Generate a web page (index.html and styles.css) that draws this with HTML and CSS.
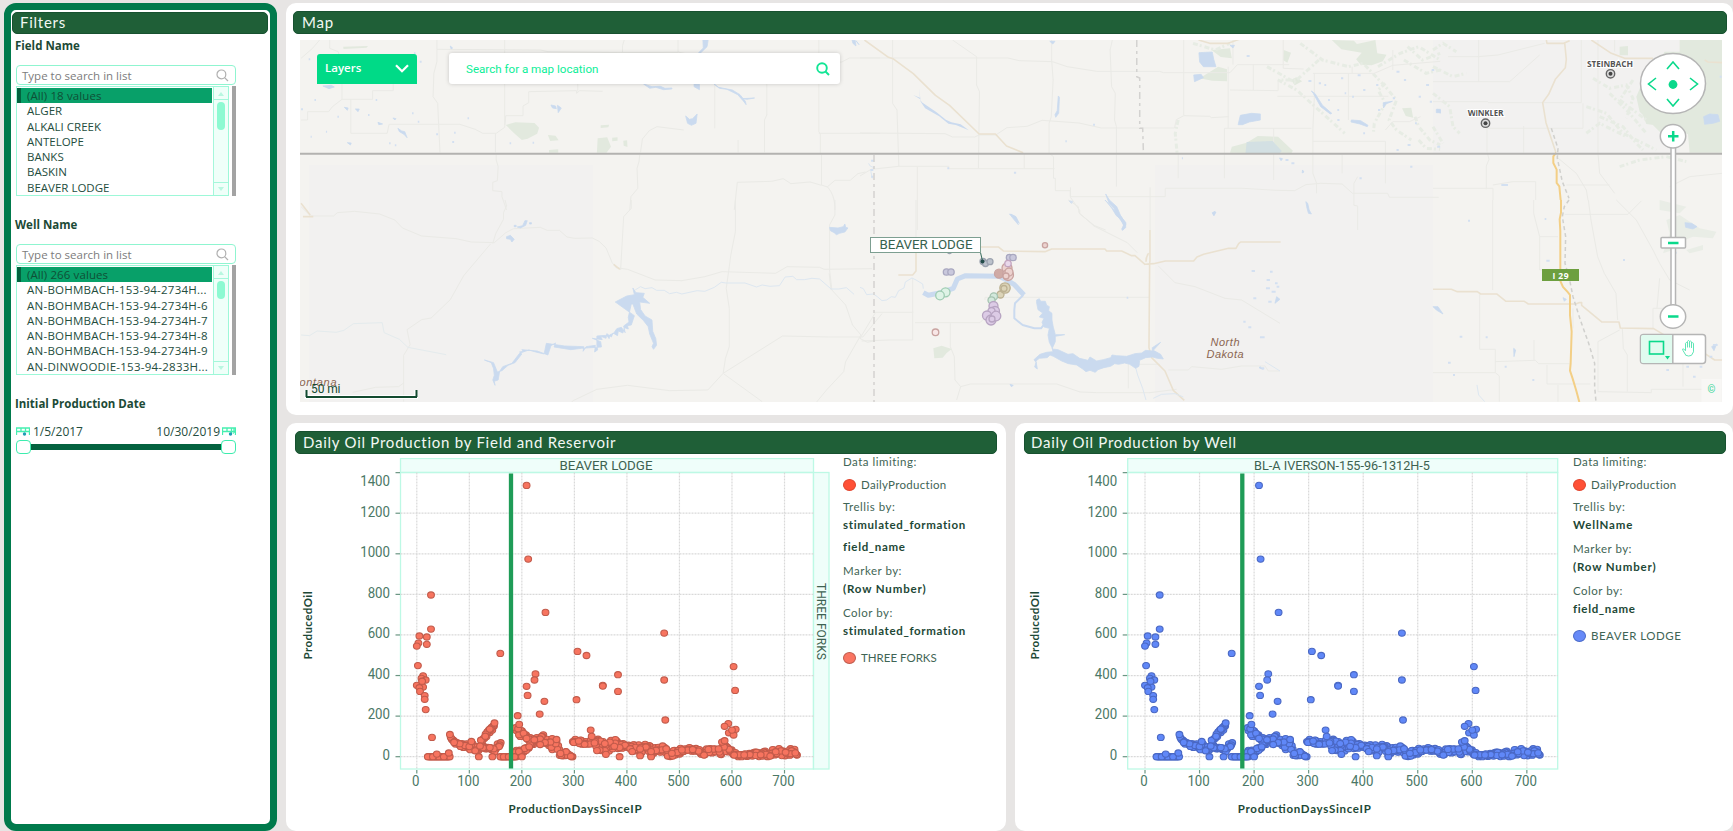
FILE: index.html
```html
<!DOCTYPE html>
<html lang="en">
<head>
<meta charset="utf-8">
<title>Production dashboard</title>
<link rel="stylesheet" href="styles.css">
</head>
<body>
<div class="dashboard">
  <aside class="filters">
    <h2 class="bar">Filters</h2>
    <section class="filter">
      <h3>Field Name</h3>
      <div class="find"><span>Type to search in list</span><svg width="13" height="13" viewBox="0 0 13 13"><circle cx="5.4" cy="5.4" r="4.4"/><path d="M8.6 8.6 12 12"/></svg></div>
      <div class="listwrap">
        <div class="list">
          <ul><li class="on">(All) 18 values</li><li>ALGER</li><li>ALKALI CREEK</li><li>ANTELOPE</li><li>BANKS</li><li>BASKIN</li><li>BEAVER LODGE</li></ul>
          <div class="scroll"><i class="up"></i><b class="thumb"></b><i class="down"></i></div>
        </div>
        <div class="edge"></div>
      </div>
    </section>
    <section class="filter second">
      <h3>Well Name</h3>
      <div class="find"><span>Type to search in list</span><svg width="13" height="13" viewBox="0 0 13 13"><circle cx="5.4" cy="5.4" r="4.4"/><path d="M8.6 8.6 12 12"/></svg></div>
      <div class="listwrap">
        <div class="list wells-list">
          <ul><li class="on">(All) 266 values</li><li>AN-BOHMBACH-153-94-2734H...</li><li>AN-BOHMBACH-153-94-2734H-6</li><li>AN-BOHMBACH-153-94-2734H-7</li><li>AN-BOHMBACH-153-94-2734H-8</li><li>AN-BOHMBACH-153-94-2734H-9</li><li>AN-DINWOODIE-153-94-2833H...</li></ul>
          <div class="scroll"><i class="up"></i><b class="thumb short"></b><i class="down"></i></div>
        </div>
        <div class="edge"></div>
      </div>
    </section>
    <section class="filter third">
      <h3>Initial Production Date</h3>
      <div class="dates">
        <svg class="cal" width="14" height="9" viewBox="0 0 14 9"><path d="M0 1h14M.5 1v7M0 4.500h13M5 1v4M9.500 1v3M13.500 1v7"/><circle cx="8.500" cy="7" r="1.700"/></svg>
        <span class="from">1/5/2017</span><span class="to">10/30/2019</span>
        <svg class="cal" width="14" height="9" viewBox="0 0 14 9"><path d="M0 1h14M.5 1v7M0 4.500h13M5 1v4M9.500 1v6M12 1v6M13.500 1v7"/><circle cx="8.500" cy="7" r="1.700"/></svg>
      </div>
      <div class="slider"><i></i><i></i></div>
    </section>
  </aside>

  <main class="content">
    <section class="panel mappanel">
      <h2 class="bar">Map</h2>
      <div class="map">
        <svg class="mapsvg" width="1422" height="362" viewBox="300 40 1422 362">
          <rect class="land" x="300" y="40" width="1422" height="362"/>
          <path class="land2" d="M309 165H593V402H309zM1155 165H1433V402H1155zM1433 40h247v114h-247z"/>

          <!-- north-west -->
          <g transform="translate(280 0) scale(.3827 .3333)">
            <path class="forest" d="M590 375l25-8 50 2 12 14-5 18-25 15-15 4-18-18zM700 405l20 2 8 14-22 2zM830 415l25-3 10 28-12 18h-25zM838 376l22-2-2 8-20 2zM868 413l14-1v10l-14 2zM897 422l10-1 1 20-10-4zM703 450l24-2v10h-24zM165 140l65-2-4 5-60 4z"/>
            <path class="road" d="M410 118V148L680 150 700 155 890 158 1040 157M410 148V185L402 220 400 290 412 310 418 457M130 118V145l22 10 10 40V298l-25 22-10 15H72v25H55M162 298h80v-26h54V235M185 298V400h95l5-27H470l40 15 20 12h35l22-18 3-35h45V318l15-10V275l125-3v8l8-8 60 2M587 118V375M563 400V457M895 157v-20l5-19M1040 118v38l90 22h130M778 200V275M1055 390l-70-10-20 12-18 25-5 40M1136 250V385M1272 250V345l-6 15V457M1408 118V395l4 8V460M1408 400H1568M1408 190l60-4 20-12h80M1197 420V457M55 175l30-30 20-27M565 465V480l5 20-2 42-12 5v25l24 3v15l12 40M940 465l-2 20-5 20 2 60-18 25-3 40M1415 465V555l15 6 20-20h40l20-20 20-5M1430 560c15 20 20 40 20 70M1415 556l-30-10-50 5-20-15-30 8-90 3-8 83"/>
            <path class="water" d="M308 385l10 8 8 2 6 18-8-10-12-8zM112 258l22-2 8 5-14 5zM168 322l10 2-2 7zM197 327h10l-3 8zM256 367l12 5-10 2zM176 428l10 1-2 6zM1060 348l10 10 8-2 12-14-3 28-12 6-10-6zM950 252l22 8 22-1 12 6 18-1v3l-22 2-20-7-16 3zM1082 252l14 1v16l-14-9zM1134 252l12 10 36 8 20 14 14 20 2 10-8-12-14-18-28-16-20-3zM1105 118h14l-3 22-18 20-4-2 12-14zM1210 296l30-2-20 4zM1495 120l8 2 2 16-8-8zM1505 122l8 12zM445 138l6 6-4 3zM708 315l12 3 2 8-10-2zM725 316l10 8-8 14zM295 354l8 2-3 4z"/>
            <path class="specks" d="M75 178h4M155 185h4M270 200h4M315 240h4M345 210h4M365 185h5M55 328h5M90 300h4M250 300h4M230 345h4M345 340h4M360 365h4M490 355h4M455 398h4M450 426h5M408 403h5M150 350h4M285 430h4M300 436h4M120 395h3M80 410h3M350 160h4M600 430h4M660 428h4"/>
            <path class="stream" d="M1538 490l4 8 10 5-8 12 4 20"/>
          </g>

          <!-- south-west -->
          <g transform="translate(280 200) scale(.3827 .3333)">
            <path class="road" d="M55 20l25 28h60l10-10 45-4 65 8 40 18 20 24 50 24 90 8 40 10 60 2 30-30 20-12 70-4 18 9h32l20 20 20 4 46-1 18 10 18 20 16 44 10 15 30 5 50 22 22 10 70 2 60-12 45-15 140 5 30-20 85 2 12 6 125-2M556 130l8-30 20-42v-20l8-20-4-18M550 132l-70 95-35 72-50 55-25 5-38 30 8 45-17 32V605M918 0v25l-20 25-8 160M1190 0V95l-12 70-4 35-8 65 8 60V440l-10 35-6 45-40 50-100 2-110-16-80 12-62 34-16 17M1158 520l155-112 120 3h90l50-70M1160 522l100 83M1450 0v45l-14 30V210l6 60 36 45 18 60 22 30-40 80-5 30-45 55-32 45M1435 220l5 50M190 577l60-15 60-2 12-10M1515 415l20 12 20-5"/>
            <path class="river" d="M55 405l22 2 20-14 50 4 20-6 25-20 75-3 5 30 40 20 22 24 100 22"/>
            <path class="stream" d="M928 270l14-10 12 6 18-3 12 8h20l14 10 18-4 14 5 40-10 20 2 25-12 18-15 12 2h50l30 12 15-6 20 4 25-2 15-26 20-2 10 10h20l20-4 20 2 30 30h20l20-4 20 20"/>
            <path class="water" d="M876 306l30-18 20-4-4-20 8 14 22 2-4 12 18 18-26-4 2 22 12 20 18 12 2 34 8 22 2 20-8 12-4-8 4-10-10-28-4-22-12-18-18-20-10-30h-4l-8 40 2 14-14 12 4 20-10-16-12 4-8 14-10 4-2 12-6-10-26 2v28l2 14-8 6 2-20-24 4-8 14 2-14-50-2-48-8-6 32-22-6-18-6-24 10-20 30-24 10-8 14-4 26-10 4 2 12-6-16 4-14-2-20-6-18-18-8 24 8 10 28 12-4 16-16 18-8 18-26-6-6 10-2-4-5 40 4 28 12 8-28 12-8-4 12 44 8 28-4 52-4-2-16-22-10 26 4-4-10 14 6 2-14 12 10 4-12 12 8 2-14 12 6 4-16 10 4-2-10 10-2 8-28z"/>
            <path class="water" d="M1436 82l22 2 14-4 4-8 2 10 6 2-8 12-14 4-8 4-6-6-10-6zM640 62h6l-4 14-14 8-8-3 14-4zM592 110l10-4 10 12-6 8-4-8-10-2zM612 76h5v4h-5zM652 68h5v4h-5z"/>
            <path class="road tan" d="M60 50h27M55 10l24 35M872 193l16 15"/>
          </g>

          <!-- north-centre -->
          <g transform="translate(860 30) scale(.37 .3333)">
            <path class="forest" d="M1000 368l5-18 40-12 30-20 55 2 40 42-4 7zM1275 30l60 2 8 10 50-12 5 40 25 4-10 20-30 12-30-2-12-16 15-20-55-10zM918 145l50-35 24 8v36l-40-2zM1165 150l14-8 16 12-20 12zM1145 60l20 8-10 30-12-8zM950 60l50-5 5 30-30-4zM1465 235l25-2 5 30-20-5z"/>
            <path class="woods" d="M1190 40l60 50 70 20 40-10 60 70 30 40-20 60 20 30 40 30M1240 90l-60 60-50 0 50 30 50 50 40 40 20 20 20 20M1400 110l60-40 50-20 58 40M1420 160l-20 20 20 40-30 60-2 25M1470 90l60 40 38-10M1500 260l10 30 30 40 28 15M1100 110l80 50M900 40l60 20 40-20M860 270l-8 40 5 60M1510 330l20 25 38 3M1480 50l40 40 48-20"/>
            <path class="road" d="M0 84H400l30 8 90 3 40 15 80 14 170 0 10 4h180l20-24h140M88 30V220l12 20 5 170M250 30l65 50V165l8 20-3 230M518 30V90l4 60-5 110-6 20v90l12 10v65h5v37h40v18H825v-25h210l90 6 50 1 30-18 40-4 58 2 28 28h95l5 12h133M682 30l-6 30 4 110 10 20-2 80 5 20V470M0 309l230 2 20 10 60 0 12-6h45l30-22 55-4 40-18 100 8 60 15H850l5-25 20-12 70 2 5 4 46-3M875 30V255M995 110V295M1000 180l130 2V150M985 370V295h235M1063 104v76M1128 199h300M1228 130v70l-4 95V430l10 30v30M1224 334H1420M1224 130H1390l50-24 128-12M1144 30v85l55 2M1008 30v74M1330 110v20M1440 60v60M1320 130V270M1420 334V460M1420 300l20-25h45l30-15M860 370v75M985 370v75M1118 295V450M1303 375v55M1345 440l-10 20v66l10 2v72M784 472V600M155 410V600M0 438l30-20 75-9H240v7H526M444 370v45M569 472v30l25 40v10l40 35 30 13"/>
            <path class="road tan" d="M12 30l65 52 12 4 55 45 60 65 38 30 80 86h44l30 36 45 20M915 30l30 10h50l30-12"/>
            <path class="water" d="M916 68l36-2 4 22 6 22h-34l-10-14zM902 135l20-2 6 10-24 12zM1022 284l6-28 30-6 24 2v18l-30 6-18 8zM513 34h14l-6 8zM1000 46h12l-4 8zM536 198l3 4-2 48-8 12-2-8 6-12zM1220 183l10 8 20 35 25 24-4 2-26-22-20-40zM1414 218l25-4-18 8-6 12zM1328 270l25 2 20 14-2 4-20-8-24-6zM1560 238l8 2v10zM664 492l10 18 20 20 10 26 15 26-8 18-4-2 6-14-18-28-8-20-14-16zM404 552l16 8 8 24-8-10zM952 548l8-4-4 12zM1205 515l5 5 4 20 6 12-8-2-4-16zM1134 384l8 2-4 6zM1196 420l4 6-5 3zM565 512l10 5-4 3z"/>
            <path class="water light" d="M1045 336l70-3 25 30-5 6h-93z"/>
            <path class="lake" d="M160 175l2 28-18-8 18 12 5 10 40 30 25 22 15 8 25 6 22 18-35-16-20-4-25-22-38-24-12-20z"/>
            <path class="specks" d="M1255 165h5M1300 145h6M1345 136h8M1360 180h6M1330 200h5M1395 165h6M1450 125h8M1470 150h6M1530 165h8M1510 200h6M1545 120h7M1480 345h8M1560 350h8M1450 360h6M1400 240h6M1440 205h6M1540 215h6M1500 280h5M1360 310h5M1310 190h4M1265 210h5M1290 240h5M1150 390h8M1166 400h8M1487 410h6M1350 445h6M1045 78h8M1212 153h8M1240 160h6M1290 270h6M630 284h5M30 392h8M28 420h8M30 440h6M870 385h3M236 415h5M416 428h6M555 334h4"/>
            <path class="province" d="M748 30V140l8 4V295h8l2 74"/>
          </g>

          <!-- south-centre -->
          <g transform="translate(860 200) scale(.3333)">
            <path class="road" d="M168 0V140M158 235v185H90l-85 3M43 337H160M0 415l45-75M165 368H360l10-10M271 370v70l12 30 2 70 17 20 30-8H590l70 24 50 2h160l80-10M302 560l-12 40M375 300v-8H868M625 0l30 20 2 18 45 40 100 50 30 30M895 198l50 50 60 12 90 35 50 5 115 70M805 490v75M830 493h70M925 510h60l10-10 90 8 60-10h70l10 15h35"/>
            <path class="road tan" d="M360 141h55l15 12 125 2 20-8h160l5 6h45l30 14h10l30 26 26-2 35-8h85l10-12 20-8 75-18h22l8-14 6-5h120M168 158v55l-10 12h-43M870 90v90l-1 13-2 250 8 30 40 40 25 58 33 30M858 185q0-15 8-25"/>
            <path class="stream" d="M0 262l10 4 10 18 20-2 12 8 14 12 14-2 14-10 12 2 10-20 16-8 4-18 20-12 12 6 20 12 2 14M825 495l8 30 15 40 10 35M880 595l25-12 40-2 25 10M1215 485l45 28"/>
            <path class="lakeline wide" d="M190 278l15 8 30-6 45-15 12-28 25-10 100 2 25 12 20 12 30 32"/>
            <path class="lakeline" d="M490 285l-25 25-2 20v25l25 20 35 10h20l12-15"/>
            <path class="water" d="M530 300l8-4 4 8 14 0 4 12 8 4-2 12 10 8 0 20 4 22 4 14 2 8h28l-28 5 0 16-10 22 18 2 30 14 15-2 20 14 25 6 6-10 20 12 20-4 22-6 4-8 14 2 30 2 25-8 20-2 12-8 20 2 0-10 25-16-22 24 22 12 8 14-18-2-15-4-20 2-18 8-2 18-10 6-18-12-15-4-18 4-12-2-12 8-20 4-18 6-8 8-16-6-12 4-10-8-18-12-25-4-20-8-25-14-10-4-8 8-24 2-10 8 4 24-8-6 4-14-6-8 18-16 20-6 18-2v-8l-10-20-4-22 4-20-16-4-6-14 6-12-14-4 10-12-14-10-4-20zM735 0l32 35 12 10 18 22 0 16-10 8 4-14-8-20-14-10-12-20-15-20zM452 42l16 8 10 20-8-8zM1058 40l10-3-6 10zM450 553l10 3-6 4zM1250 290l10 8-15 12zM1200 500l10 8-12-4z"/>
            <path class="specks" d="M1175 213h10M1220 240h10M1218 265h12M1235 275h12M1245 250h8M1180 295h9M1150 365h7M1165 382h9M1200 412h14M1230 215h8M1250 260h8M1225 305h10M630 5h8M1205 505h8M800 293h5"/>
            <path class="forest" d="M220 445l25-8 30 10-15 12-12 14-25 2z"/>
          </g>

          <!-- north-east -->
          <g transform="translate(1433 0) scale(.3333)">
            <path class="forest" d="M740 120h128V458H770l-5-55-20-8-65 0-60-60-10-45 25-60 40-45 20-30h45zM560 140l25-2v28h-25zM620 320l40 0 40 60-60-8z"/>
            <path class="woods" d="M0 150l30-20 40 25M0 200l60 30 40-10M0 280l50 40 10 60 20 20M0 380l30 50M480 235l50 30 50-10 20 40-20 60M460 320l60 20 50 60 60 30 40 20M530 280l60 60 50 60M460 400l40-30 80 40M560 500l60-20 80-10 60 15M500 350l70 30 40 50 20 20M600 240l-40 60 80 60"/>
            <path class="road" d="M137 120v125M45 170h90l60-5 140-35M0 245h230l90-80M165 308h280V120M0 305h165M160 385h290V310M162 380v75M272 378v80M163 458l5 20-8 20v70M0 565h180v35M180 555l60-10h68v55M400 555h130M495 120v340l5 60 45 60M545 155v-35M370 470l60 50 30 50 5 30M710 560l60-30 98-10"/>
            <path class="road tan" d="M340 120l2 10h50l18-8M395 128l5 50-3 25-30 35-20 45-18 25 10 60 15 45 15 45M475 120l60 40 40 15h85M815 180l10 6 45 2"/>
            <path class="highway" d="M369 459l-8 10 0 20 10 20 0 40 8 10 4 41"/>
            <path class="rail" d="M355 385l20 60-2 30 15 70 20 50"/>
            <path class="water" d="M812 350l18-8 25 2 5 20-20 6-25 3zM10 328h12v10H10z"/>
            <path class="specks" d="M205 555h20M860 230h6"/>
          </g>

          <!-- south-east -->
          <g transform="translate(1433 200) scale(.3333)">
            <path class="forest light" d="M700 60l40-15 60 40 50 10-10 20-60-5-50 20-10 20-30 10 20-60zM680 0l80 20-20 20-60-10zM760 150l50-15v15l-40 10z"/>
            <path class="road" d="M179 0v270M302 0v40l18 70v100h60M320 110h55M395 43h190l40-40M140 283v165h47v70l12 10v77M187 518H0M187 485l120-4 10 10H410M303 420v60M342 495v57h130M375 555v50M466 0l8 60 20 110 20 50 35 60 5 80M550 0l60 60 50 90 20 40 30 50 60 30M680 235l-8 90M660 385v-60h40M495 425l65-35M495 425v150l160 3v-10h210M568 385l3 60 12 20v110M750 450v110M420 325v60"/>
            <path class="road tan" d="M0 268h55l18 7h60l10 7h48l28 22h55l12 8h142l10-4h8v8l60 50h52l4 18 100 2 30 18 20 8M815 460l30 20h25"/>
            <path class="highway" d="M384 0v38l-4 20 2 35v150l8 18 15 16 6 8 0 60 5 50-3 95-2 22 8 24 6 20 6 20 8 30"/>
            <path class="rail" d="M408 0l-14 20-6 30 10 60-2 80 12 40 12 60 22 70 25 70 18 60 0 70 4 45"/>
            <path class="water" d="M756 68l20 2 16 10-12 7-22-5zM0 320l15 0 15 22-20-12zM390 293l10 5-6 6zM242 445l6 5-5 20zM836 440l15-8-8 20z"/>
            <path class="stream" d="M132 555l5 30 18 20"/>
            <path class="specks" d="M105 62h6M335 57h5M340 182h10M570 180h6M80 410h8M158 412h6M45 488h8M60 525h6M298 540h6M215 500h6M725 158h6M840 435h14M830 470h8M760 500h8M780 530h8M820 550h8M700 510h8M800 500h8"/>
          </g>

          <path class="nation" d="M300 153.700H1722"/>
          <path class="state" d="M874 155V402"/>

          <!-- towns -->
          <g class="town"><text x="1485.700" y="116" textLength="36">WINKLER</text><text x="1610" y="67" textLength="46">STEINBACH</text>
            <circle cx="1485.500" cy="123.200" r="4.200"/><circle class="dot" cx="1485.500" cy="123.200" r="2"/>
            <circle cx="1610.500" cy="73.800" r="4.200"/><circle class="dot" cx="1610.500" cy="73.800" r="2"/></g>
          <g class="region"><text x="1225" y="346" textLength="29">North</text><text x="1225" y="358" textLength="37">Dakota</text><text x="318" y="385.500" textLength="37">ontana</text></g>
          <rect x="1542" y="269" width="37" height="12" fill="#6d9f3f"/>
          <text class="shield" x="1560.500" y="278.500" textLength="16">I 29</text>

          <!-- wells -->
          <g class="wells">
            <g stroke="#a9a8c0" fill="#c9c8dc"><circle cx="946.500" cy="272" r="3.200"/><circle cx="951" cy="272" r="3.200"/><circle cx="1009.500" cy="257.500" r="3.200"/><circle cx="1013" cy="257.500" r="3.200"/></g>
            <g stroke="#9ca3b0" fill="#bcc2cc"><circle cx="983" cy="261.500" r="3"/><circle cx="985.500" cy="263.500" r="3"/><circle cx="990" cy="261.700" r="3"/><circle cx="949.500" cy="251.500" r="2"/></g>
            <g stroke="#c9a3a0" fill="#ecd2cf"><circle cx="1007" cy="268" r="5"/><circle cx="999" cy="273.700" r="4.500" fill="#cfaaa5"/><circle cx="1008" cy="275" r="5.500"/><circle cx="1009" cy="272" r="4"/><circle cx="1006" cy="276" r="3"/><circle cx="1045" cy="245.300" r="2.600"/><circle cx="935.500" cy="332.300" r="3.300" fill="#f8e6e6"/></g>
            <circle cx="1008" cy="263.500" r="3.200" stroke="#c3a5c0" fill="#e9d8ea"/>
            <g stroke="#bcb192" fill="#dcd4b8"><circle cx="1000.500" cy="294.500" r="3.500"/><circle cx="1005" cy="288" r="5.200"/><circle cx="1004" cy="288.500" r="3"/></g>
            <g stroke="#a5c3b0" fill="#d3e8dc"><circle cx="993.800" cy="296.500" r="3.700"/><circle cx="991.500" cy="300.300" r="3.500"/></g>
            <g stroke="#9fcdb3" fill="#def3e6"><circle cx="945.500" cy="292.300" r="4.500"/><circle cx="940" cy="295.500" r="4.300"/></g>
            <g stroke="#b7a4c2" fill="#dccbe6"><circle cx="993.500" cy="306" r="4.500"/><circle cx="995" cy="311" r="4.500"/><circle cx="991.500" cy="311" r="3.500"/><circle cx="987" cy="315.500" r="4.500"/><circle cx="991" cy="320" r="5"/><circle cx="996" cy="316" r="4.800"/><circle cx="992" cy="319" r="3"/></g>
          </g>
          <path d="M980.500 252.500 982.500 261" stroke="#33685a" fill="none"/><circle cx="982.500" cy="261.500" r="2" fill="#244c4a"/>
          <rect x="870.500" y="237.500" width="110" height="15" fill="#fff" stroke="#7d9f91"/>
          <text class="callout" x="879.500" y="249" textLength="93" lengthAdjust="spacingAndGlyphs">BEAVER LODGE</text>

          <!-- scale -->
          <path d="M306.500 390v7H416v-7" fill="none" stroke="#fff" stroke-width="4"/><path d="M306.500 390v7M306 397H417M416.500 390v7" fill="none" stroke="#134b30" stroke-width="2"/>
          <text class="scale" x="311" y="393" textLength="29.500">50 mi</text>

          <!-- navigation -->
          <g class="nav">
            <ellipse cx="1673" cy="83.500" rx="32.500" ry="30"/>
            <path class="g" d="M1667 69l6-7 6 7M1667 99l6 7 6-7M1656 78l-7.500 6 7.500 6M1690 78l7.500 6-7.500 6"/>
            <circle class="gd" cx="1673" cy="84.500" r="4.400"/>
            <rect x="1671" y="146" width="4.500" height="162"/>
            <ellipse cx="1673" cy="136.300" rx="12.700" ry="11.700"/><path class="g bold" d="M1668 136.300h10.500M1673.200 131v10.500"/>
            <rect x="1661" y="237.500" width="24.500" height="10.500" rx="1"/><path class="g bold" d="M1668 243h10.500"/>
            <ellipse cx="1673" cy="316.500" rx="12.700" ry="11.700"/><path class="g bold" d="M1668 316.500h10.500"/>
            <rect x="1640.500" y="334.500" width="65" height="29" rx="3"/><path d="M1643 335h29.500v28H1643q-2 0-2-2v-24q0-2 2-2z" fill="#e0fbef" stroke="none"/><path d="M1672.800 335v28" fill="none"/>
            <rect class="g" x="1649.500" y="341.500" width="14" height="12.500"/><path class="gd" d="M1665 356h5l-2.500 3.500z"/>
            <path class="hand" d="M1686 355.500l-3-5q-1-2 .5-1.700l2 2v-7.500q1-2 2 0v4-6q1-2 2 0v6-5.500q1-1.500 2 0v6-4.500q1.200-1.300 2 0v8.500l-2 3.500q-3 1.500-5.500 0z"/>
            <rect x="1701.500" y="379" width="20" height="23" fill="#f8f7f5" stroke="none"/>
          </g>
          <text class="copy" x="1711.500" y="392.500">©</text>
        </svg>
        <div class="layers"><span>Layers</span><svg width="14" height="9" viewBox="0 0 14 9"><path d="M1 1.200l6 6 6-6"/></svg></div>
        <div class="locate"><span>Search for a map location</span><svg width="14" height="14" viewBox="0 0 14 14"><circle cx="6" cy="6" r="4.800"/><path d="M9.500 9.500 13 13"/></svg></div>
      </div>
    </section>

    <div class="charts">
      <section class="panel">
        <h2 class="bar">Daily Oil Production by Field and Reservoir</h2>
        <div class="body">
          <svg class="plot" id="byField" width="550" height="373" viewBox="286 458 550 373"></svg>
          <div class="legend">
            <p>Data limiting:</p>
            <p class="key"><i class="red"></i>DailyProduction</p>
            <p>Trellis by:</p><p class="val">stimulated_formation</p><p class="val extra">field_name</p>
            <p class="head">Marker by:</p><p class="val rows">(Row Number)</p>
            <p class="head">Color by:</p><p class="val">stimulated_formation</p>
            <p class="key last tight"><i class="salmon"></i>THREE FORKS</p>
          </div>
        </div>
      </section>
      <section class="panel">
        <h2 class="bar">Daily Oil Production by Well</h2>
        <div class="body">
          <svg class="plot" id="byWell" width="552" height="373" viewBox="1015 458 552 373"></svg>
          <div class="legend">
            <p>Data limiting:</p>
            <p class="key"><i class="red"></i>DailyProduction</p>
            <p>Trellis by:</p><p class="val rows">WellName</p>
            <p class="head">Marker by:</p><p class="val rows">(Row Number)</p>
            <p class="head">Color by:</p><p class="val">field_name</p>
            <p class="key last"><i class="blue"></i>BEAVER LODGE</p>
          </div>
        </div>
      </section>
    </div>
  </main>
</div>
<script src="charts.js"></script>
</body>
</html>
```

FILE: styles.css
```css
* { box-sizing: border-box; }
body { margin: 0; width: 1733px; height: 831px; overflow: hidden; background: #e7e5e4; font-family: "Open Sans", "Noto Sans", sans-serif; font-size: 12px; color: #1c4a36; }
h2, h3, p, ul { margin: 0; padding: 0; list-style: none; font-weight: 400; }
.dashboard { display: grid; grid-template-columns: 273px 1447px; column-gap: 9px; padding: 3px 0 0 4px; height: 831px; }
.bar { height: 23px; padding-left: 8px; background: #1f5f37; border: 1px solid #175130; border-radius: 5px; color: #f3f8f4; font: 15px/20px Lato, sans-serif; letter-spacing: .75px; white-space: nowrap; }

.filters { height: 828px; background: #fff; border: 7px solid #007a4c; border-radius: 12px; padding: 2px 1px; }
.filters .bar { height: 22px; margin-right: 1px; line-height: 19px; padding-left: 7px; }
.filter { padding: 3px 0 0 4px; width: 224px; }
.filter h3 { font-weight: 700; font-size: 11.500px; line-height: 16px; height: 27px; margin-left: -1px; padding-top: 1px; white-space: nowrap; }
.second { margin-top: 17px; }
.third { margin-top: 17px; }
.find { display: flex; align-items: center; justify-content: space-between; height: 20px; margin-top: 1px; border: 1px solid #8ff5d0; border-radius: 4px; padding: 0 6px 0 5px; color: #7c7c7c; font-size: 11.500px; }
.find svg { fill: none; stroke: #b0b0b0; stroke-width: 1.200; }
.listwrap { display: flex; gap: 3px; margin-top: 1px; height: 110px; }
.list { flex: 1; display: flex; border: 1px solid #9df8d8; }
.list ul { flex: 1; padding-top: 1px; }
.list li { height: 15.300px; line-height: 15.500px; padding-left: 10px; font-size: 11.500px; white-space: nowrap; color: #244d3d; }
.wells-list li { letter-spacing: .25px; }
.list li.on { background: #08a069; border-left: 4px solid #04623f; padding-left: 6px; margin-right: 1px; color: #0f4f36; letter-spacing: .1px; }
.scroll { width: 15px; display: flex; flex-direction: column; align-items: center; justify-content: space-between; border-left: 1px solid #a5f7db; background: #effff9; }
.scroll i { width: 14px; height: 13px; position: relative; border-bottom: 1px solid #a5f7db; }
.scroll .down { border-bottom: 0; border-top: 1px solid #a5f7db; }
.scroll i::after { content: ""; display: block; width: 0; margin: 5px auto 0; border: 3px solid transparent; border-top: 0; border-bottom: 4px solid #b8f7e0; }
.scroll .down::after { border-top: 4px solid #b8f7e0; border-bottom: 0; margin-top: 4px; }
.thumb { width: 8px; height: 28px; margin-bottom: auto; margin-top: 2px; border-radius: 4px; background: #8dfad2; }
.thumb.short { height: 18px; }
.edge { width: 4px; background: #a3a3a3; }
.dates { display: flex; align-items: center; height: 14px; margin-top: 2px; font-size: 12px; color: #244d3d; }
.dates .from { margin-left: 3px; }
.dates .to { margin-left: auto; margin-right: 2px; }
.cal { fill: none; stroke: #45efb0; stroke-width: 1.300; }
.cal circle { fill: #1e9fb5; stroke: none; }
.slider { display: flex; justify-content: space-between; margin-top: 2px; height: 14px; background: linear-gradient(#04623f, #04623f) 0 4px / 100% 6px no-repeat; }
.slider i { width: 15px; height: 14px; border: 1.500px solid #3dedae; border-radius: 4px; background: #fff; }

.content { display: flex; flex-direction: column; gap: 8px; }
.panel { background: #fff; border-radius: 10px; }
.mappanel { height: 412px; padding: 8px 6px 0 7px; }
.map { position: relative; width: 1422px; height: 362px; margin: 6px 0 0 7px; }
.mapsvg { display: block; overflow: hidden; }
.land { fill: #f4f3f0; }
.land2 { fill: #f2f1f0; }
.mapsvg path { vector-effect: non-scaling-stroke; }
.road { fill: none; stroke: #eaeae6; stroke-width: 1; stroke-linejoin: round; }
.road.tan { stroke: #eae1d0; stroke-width: 1.600; }
.highway { fill: none; stroke: #f3cf86; stroke-width: 2; }
.rail { fill: none; stroke: #d0d0cd; stroke-width: 1.500; stroke-dasharray: 4 3; }
.water { fill: #cadaef; stroke: #cadaef; stroke-width: .8; stroke-linejoin: round; }
.lake { fill: #cadaef; }
.water.light { fill: #d3e0e3; stroke: none; }
.stream { fill: none; stroke: #dde7f0; stroke-width: 1; }
.river { fill: none; stroke: #e4ebed; stroke-width: 1; }
.lakeline { fill: none; stroke: #cadaef; stroke-width: 2; stroke-linejoin: round; }
.lakeline.wide { stroke-width: 5; }
.specks { fill: none; stroke: #d3e0f1; stroke-width: 2; }
.forest { fill: #e2e9de; }
.forest.light { fill: #e9ede6; }
.woods { fill: none; stroke: #e7ece4; stroke-width: 3; stroke-dasharray: 5 2 2 3; }
.nation { fill: none; stroke: #b3b2b0; stroke-width: 2; }
.state, .province { fill: none; stroke: #d3d2d0; stroke-width: 1.500; stroke-dasharray: 7 4 3 4; }
.town text { font: 700 8.500px "Open Sans", sans-serif; fill: #555; text-anchor: middle; paint-order: stroke; stroke: #fff; stroke-width: 2px; }
.town circle { fill: #ddd; stroke: #666; stroke-width: 1.400; }
.town .dot { fill: #444; stroke: none; }
.region text { font: italic 11px "Liberation Sans", sans-serif; fill: #8b6650; text-anchor: middle; }
.shield { font: 700 8.500px "Open Sans", sans-serif; fill: #fff; text-anchor: middle; }
.wells { stroke-width: 1.300; }
.callout { font: 13px Roboto, sans-serif; fill: #36614e; }
.scale { font: 12px Roboto, sans-serif; fill: #134b30; }
.copy { font: 10px Roboto, sans-serif; fill: #2bd694; text-anchor: middle; }
.nav { fill: #fff; stroke: #b5b5b5; stroke-width: 1.500; }
.nav .g { fill: none; stroke: #0ad98b; stroke-width: 1.600; }
.nav .g.bold { stroke-width: 2.500; }
.nav .gd { fill: #0ad98b; stroke: none; }
.nav .hand { stroke: #5fe5b5; stroke-width: 1; fill: #fff; }
.layers { position: absolute; left: 17px; top: 14px; width: 100px; height: 30px; display: flex; align-items: center; justify-content: space-between; padding: 0 8px 4px; border-radius: 3px 3px 0 0; background: #00da87; color: #fff; font-size: 11.500px; font-weight: 600; }
.layers svg { fill: none; stroke: #fff; stroke-width: 2.200; margin-top: 2px; }
.locate { position: absolute; left: 149px; top: 13px; width: 391px; height: 31px; display: flex; align-items: center; justify-content: space-between; padding: 0 10px 0 17px; border-radius: 3px; background: #fff; box-shadow: 0 0 4px rgba(0, 0, 0, .18); color: #0bee97; font: 11.600px Roboto, sans-serif; }
.locate svg { fill: none; stroke: #12e595; stroke-width: 1.900; }

.charts { display: grid; grid-template-columns: 720px 718px; gap: 9px; height: 408px; }
.charts .panel { padding-top: 8px; }
.charts .bar { margin: 0 9px; width: 702px; padding-left: 7px; line-height: 21px; }
.charts .panel + .panel .bar { padding-left: 6px; }
.body { display: flex; margin-top: 4px; }
.plot { display: block; flex: none; }
.legend { flex: 1; padding: 0 0 0 7px; margin-top: -5px; font: 11.500px Lato, sans-serif; letter-spacing: .5px; color: #3f6555; white-space: nowrap; }
.charts .panel + .panel .legend { padding-left: 6px; }
.legend p { height: 18px; line-height: 18px; }
.legend .val { font-weight: 700; color: #1d4836; letter-spacing: .65px; }
.legend .val.rows { letter-spacing: .85px; }
.legend .extra { margin-top: 4px; }
.legend .head { margin-top: 6px; }
.legend .key { display: flex; align-items: center; margin: 5px 0 4px; gap: 5px; letter-spacing: .3px; }
.legend .key.last { margin-top: 9px; letter-spacing: .5px; }
.legend .key.last.tight { letter-spacing: 0; }
.key i { width: 13px; height: 12px; border-radius: 50%; }
.red { background: #ff5036; border: 1px solid #e0452e; }
.salmon { background: #fa7562; border: 1px solid #bd5c4e; }
.blue { background: #678af8; border: 1px solid #4b6bc9; }

.frame { fill: none; stroke: #bdf9e5; stroke-width: 1.300; }
.strip { fill: #effefa; stroke: #bdf9e5; stroke-width: 1.300; }
.grid { fill: none; stroke: #d9d9d9; stroke-width: 1.200; stroke-dasharray: 2 1; }
.tick { stroke: #6b9683; stroke-width: 1.200; }
.refline { stroke: #1f9c57; stroke-width: 4.300; }
.num { font: 14px Roboto, sans-serif; fill: #4b7866; }
.name { font: 13px Roboto, sans-serif; fill: #3d6251; text-anchor: middle; }
.axis { font: 700 11.500px Lato, sans-serif; fill: #1d4836; text-anchor: middle; }
.mk { stroke-width: 1.100; }
.mk.coral { fill: #f7745f; stroke: #c25b4b; }
.mk.indigo { fill: #6088f8; stroke: #4a68c4; }
```

FILE: charts.js
```javascript
// Individual readings: [days since first production, oil produced]
const readings = [
  [209,1337],[212,974],[27,797],[27,629],[245,711],[5,595],[19,590],[19,554],[3,560],[0,545],[159,509],
  [306,519],[323,499],[2,449],[12,398],[9,386],[17,378],[12,343],[0,352],[5,340],[6,322],[10,372],
  [15,301],[15,283],[17,232],[226,408],[224,378],[209,347],[211,302],[243,273],[234,210],[304,281],
  [354,352],[354,348],[383,404],[383,322],[192,202],[195,159],[29,95],[471,609],[471,378],[473,181],
  [603,444],[606,327],[593,163],[594,118],[603,107],[607,135],[600,131],[586,150],[581,72],[586,79],
  [331,131],[333,100],[118,0],[144,0],[200,0],[343,30],[360,12],[386,0],[410,25],[425,5],[446,0],
  [38,13],[61,18],[104,75],[148,166],[209,90],[235,60],[266,85],[139,45],[446,25]
];
// Dense stretches: [day, low, high] knots
const bands = [
  [[21,0,0],[63,0,0]],
  [[63,92,112],[72,65,75],[87,45,70],[100,33,62],[114,28,68],[124,36,85]],
  [[124,40,90],[131,95,125],[139,115,141],[148,140,168]],
  [[126,38,50],[140,38,48],[149,22,45],[155,40,78],[161,70,80]],
  [[159,0,0],[190,0,0]],
  [[188,128,145],[197,100,138],[208,85,110],[222,75,90],[236,65,112],[245,65,108],[258,35,92],[266,30,88],[272,5,28],[284,2,25],[290,0,12],[297,0,0]],
  [[188,20,38],[202,20,38],[214,38,60],[222,60,80]],
  [[297,50,88],[305,65,88],[320,60,84],[335,60,84],[345,35,88],[358,25,74],[368,22,84],[378,58,85],[386,15,76],[395,50,62],[409,35,70],[416,25,62],[425,15,62],[438,35,64],[446,5,58],[460,25,60],[470,20,58],[476,0,35],[494,0,32],[503,18,44],[514,32,46],[533,22,45],[542,0,32],[552,10,42],[565,22,40],[580,2,38],[585,20,75],[593,22,50],[605,5,28],[612,0,15],[634,0,20],[645,2,28],[655,0,28],[668,0,28],[680,8,38],[690,0,42],[702,4,34],[712,8,40],[719,8,40],[724,0,14]]
];

function expand() {
  const out = [];
  let n = 0;
  for (const band of bands) {
    for (let k = 0; k < band.length - 1; k++) {
      const [d0, l0, h0] = band[k], [d1, l1, h1] = band[k + 1];
      for (let d = d0; d <= d1; d += 1.6) {
        const t = (d - d0) / (d1 - d0), lo = l0 + (l1 - l0) * t, hi = h0 + (h1 - h0) * t;
        n++;
        out.push([d, lo + (hi - lo) * ((n * n * 0.618 + n * 0.37) % 1), (n * 7919) % 1009]);
      }
    }
  }
  out.sort((a, b) => a[2] - b[2]);
  return out.concat(readings);
}

function draw(id, o) {
  const top = 472.5, bottom = 769, y = v => 756.7 - v * 0.2029, x = d => o.x0 + d * o.sx;
  let s = `<rect class="strip" x="${o.left}" y="458.500" width="${o.right - o.left}" height="14"/>`;
  s += `<rect class="frame" x="${o.left}" y="${top}" width="${o.right - o.left}" height="${bottom - top}"/>`;
  if (o.side) {
    s += `<rect class="strip" x="${o.right}" y="${top}" width="15.500" height="${bottom - top}"/>`;
    s += `<text class="name" transform="translate(817 621.500) rotate(90)" textLength="77" lengthAdjust="spacingAndGlyphs">${o.side}</text>`;
  }
  s += `<text class="name" x="${o.titleX}" y="469.500" textLength="${o.titleW}" lengthAdjust="spacingAndGlyphs">${o.title}</text>`;
  for (let v = 0; v <= 1400; v += 200) {
    const w = String(v).length * 7.45, yy = v === 1400 ? 480.5 : y(v) - 1.7;
    if (v < 1400) s += `<path class="grid" d="M${o.left} ${y(v)}H${o.right}"/>`;
    s += `<path class="tick" d="M${o.left - 5} ${y(v)}h4.500"/>`;
    s += `<text class="num" x="${o.left - 10.5 - w}" y="${yy + 5}" textLength="${w}" lengthAdjust="spacingAndGlyphs">${v}</text>`;
  }
  for (let d = 0; d <= 700; d += 100) {
    const w = String(d).length * 7.45;
    s += `<path class="grid" d="M${x(d)} ${top}V${bottom}"/><path class="tick" d="M${x(d)} ${bottom + 1}v3.500"/>`;
    s += `<text class="num" x="${x(d) - 1 - w / 2}" y="786" textLength="${w}" lengthAdjust="spacingAndGlyphs">${d}</text>`;
  }
  for (const [d, v] of expand()) s += `<ellipse class="mk ${o.tone}" cx="${x(d).toFixed(1)}" cy="${y(v).toFixed(1)}" rx="3.400" ry="3.100"/>`;
  s += `<path class="refline" d="M${o.ref} 473.500V768.500"/>`;
  s += `<text class="axis" x="${o.axisX}" y="812.500" textLength="133">ProductionDaysSinceIP</text>`;
  s += `<text class="axis" transform="translate(${o.axisY} 625.500) rotate(-90)" textLength="68">ProducedOil</text>`;
  document.getElementById(id).innerHTML = s;
}

draw("byField", { left: 400.5, right: 813.5, x0: 416.8, sx: 0.5253, title: "BEAVER LODGE", titleX: 606, titleW: 93, side: "THREE FORKS", ref: 511, axisX: 575, axisY: 312, tone: "coral" });
draw("byWell", { left: 1127.7, right: 1557.7, x0: 1145, sx: 0.5455, title: "BL-A IVERSON-155-96-1312H-5", titleX: 1342, titleW: 176, ref: 1242.3, axisX: 1304.3, axisY: 1039, tone: "indigo" });
```
